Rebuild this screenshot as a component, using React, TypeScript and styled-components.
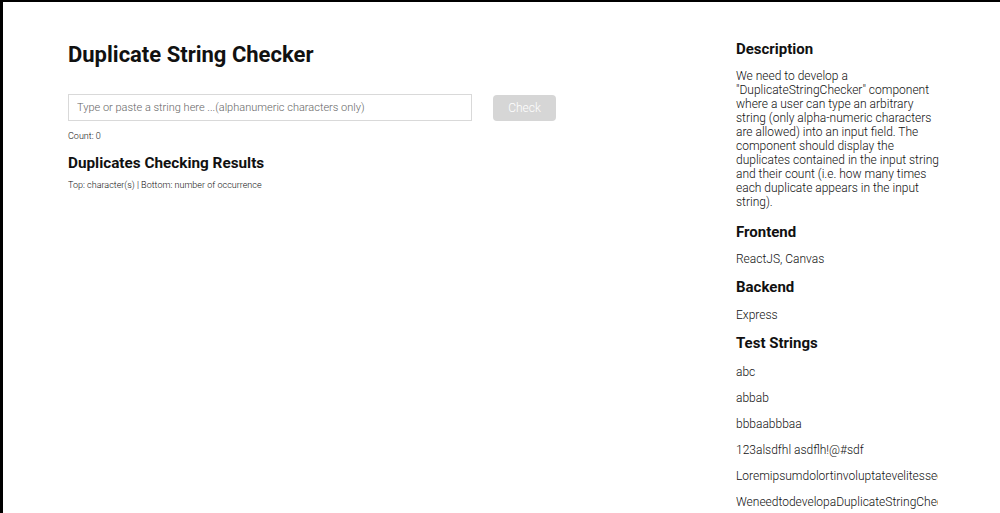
import React from "react";
import styled, { createGlobalStyle } from "styled-components";

const Global = createGlobalStyle`
  html, body { margin: 0; padding: 0; background: #fff; }
  body {
    font-family: Roboto, "Liberation Sans", sans-serif;
    color: #111;
    height: 513px;
    box-sizing: border-box;
    border-top: 2px solid #000;
    border-left: 3px solid #000;
    overflow: hidden;
  }
`;

const Page = styled.div`
  display: grid;
  grid-template-columns: 668px 204px;
  padding-left: 65px;
`;

const Main = styled.main`
  display: flex;
  flex-direction: column;
  padding-top: 40px;
`;

const Title = styled.h1`
  margin: 0;
  font-size: 22px;
  font-weight: 700;
  line-height: 26px;
  color: #111;
`;

const Form = styled.div`
  display: flex;
  align-items: center;
  gap: 21px;
  margin-top: 26px;
`;

const Input = styled.input`
  width: 404px;
  height: 27px;
  box-sizing: border-box;
  border: 1px solid #d9d9d9;
  padding: 0 8px;
  font-family: Roboto, "Liberation Sans", sans-serif;
  font-size: 11px;
  font-weight: 300;
  outline: none;
  &::placeholder { color: #666; }
`;

const Button = styled.button`
  width: 63px;
  height: 26px;
  border: none;
  border-radius: 4px;
  background: #d6d6d6;
  color: #fff;
  font-family: Roboto, "Liberation Sans", sans-serif;
  font-size: 12px;
  font-weight: 300;
  padding: 0;
`;

const Small = styled.p<{ $top: number }>`
  margin: ${(p) => p.$top}px 0 0;
  font-size: 9px;
  font-weight: 300;
  line-height: 12px;
  color: #111;
`;

const SubTitle = styled.h2`
  margin: 11px 0 0;
  font-size: 15.3px;
  font-weight: 700;
  line-height: 20px;
`;

const Aside = styled.aside`
  display: flex;
  flex-direction: column;
  padding-top: 38px;
  width: 204px;
`;

const Heading = styled.h3<{ $top: number }>`
  margin: ${(p) => p.$top}px 0 0;
  font-size: 15px;
  font-weight: 700;
  line-height: 18px;
`;

const Para = styled.p<{ $top: number }>`
  margin: ${(p) => p.$top}px 0 0;
  font-size: 12px;
  font-weight: 300;
  line-height: 14px;
  color: #111;
`;

const TestList = styled.div`
  display: flex;
  flex-direction: column;
  margin-top: 7px;
  width: 202px;
`;

const TestItem = styled.div`
  font-size: 12px;
  font-weight: 300;
  line-height: 26px;
  white-space: nowrap;
  overflow: hidden;
  color: #111;
`;

const tests = [
  "abc",
  "abbab",
  "bbbaabbbaa",
  "123alsdfhl asdflh!@#sdf",
  "Loremipsumdolortinvoluptatevelitessecillumdolore",
  "WeneedtodevelopaDuplicateStringCheckercomponent",
];

export default function App() {
  return (
    <>
      <Global />
      <Page>
        <Main>
          <Title>Duplicate String Checker</Title>
          <Form>
            <Input placeholder="Type or paste a string here ...(alphanumeric characters only)" />
            <Button disabled>Check</Button>
          </Form>
          <Small $top={9}>Count: 0</Small>
          <SubTitle>Duplicates Checking Results</SubTitle>
          <Small $top={6}>Top: character(s) | Bottom: number of occurrence</Small>
        </Main>
        <Aside>
          <Heading $top={0}>Description</Heading>
          <Para $top={11}>
            We need to develop a "DuplicateStringChecker" component where a user can type an arbitrary
            string (only alpha-numeric characters are allowed) into an input field. The component should
            display the duplicates contained in the input string and their count (i.e. how many times each
            duplicate appears in the input string).
          </Para>
          <Heading $top={14}>Frontend</Heading>
          <Para $top={11}>ReactJS, Canvas</Para>
          <Heading $top={12}>Backend</Heading>
          <Para $top={12}>Express</Para>
          <Heading $top={12}>Test Strings</Heading>
          <TestList>
            {tests.map((t) => (
              <TestItem key={t}>{t}</TestItem>
            ))}
          </TestList>
        </Aside>
      </Page>
    </>
  );
}
